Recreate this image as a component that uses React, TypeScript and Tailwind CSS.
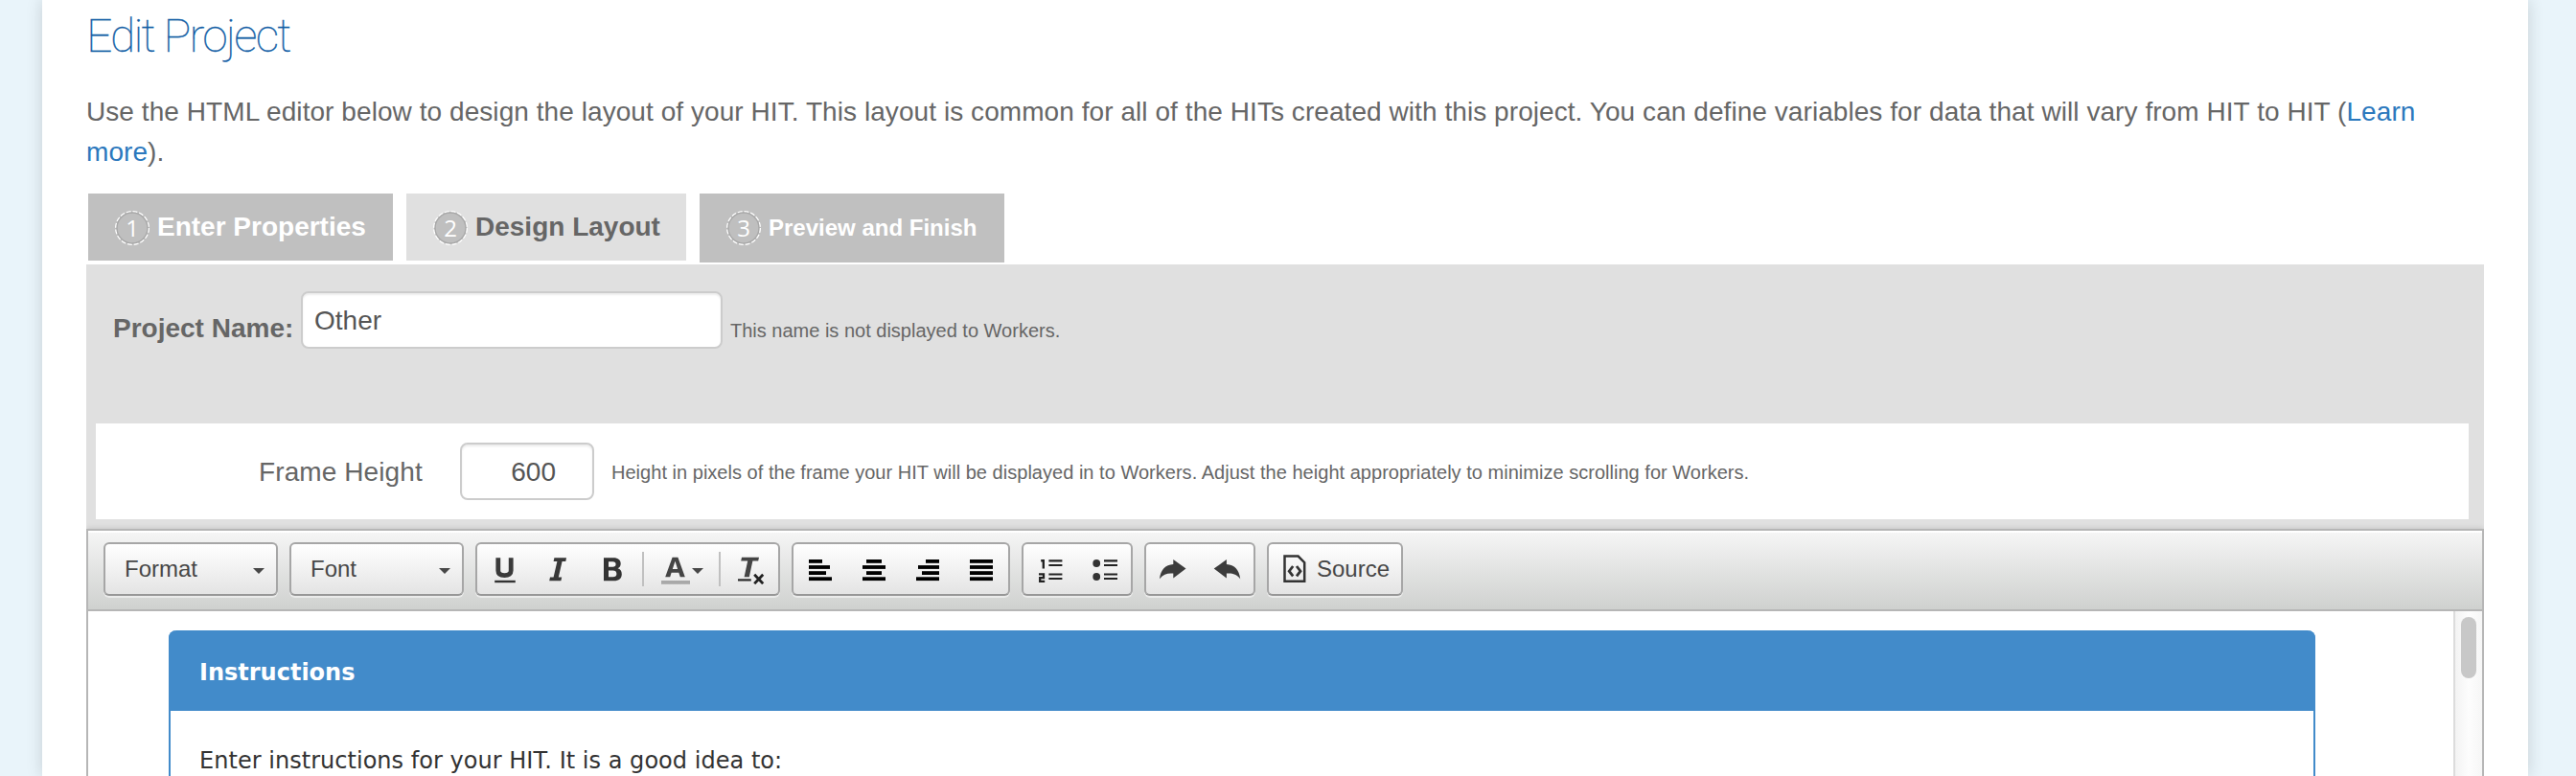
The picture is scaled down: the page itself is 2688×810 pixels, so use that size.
import type { ReactNode } from "react";

const sans = "font-['Liberation_Sans',Arial,sans-serif]";

function StepBadge({ n }: { n: string }) {
  return (
    <svg width="36" height="36" viewBox="0 0 36 36" className="mt-[18px] shrink-0">
      <circle cx="18" cy="18" r="17" fill="#c0c0c0" stroke="#fff" strokeWidth="2" strokeDasharray="4.8 1.876" />
      <circle cx="18" cy="18" r="16" fill="#bfbfbf" stroke="#a8a8a8" strokeWidth="1.4" />
      <text
        x="18"
        y="27"
        textAnchor="middle"
        fill="#fff"
        fontSize="24"
        fontWeight="500"
        fontFamily="'Open Sans', sans-serif"
      >
        {n}
      </text>
    </svg>
  );
}

function Group({ children, className = "" }: { children: ReactNode; className?: string }) {
  return (
    <div
      className={
        "flex h-14 shrink-0 items-center rounded-[6px] border-2 border-[#a6a6a6] border-b-[#979797] bg-linear-to-b from-white to-[#e4e4e4] shadow-[0_2px_0_rgba(255,255,255,0.5)] " +
        className
      }
    >
      {children}
    </div>
  );
}

function Icon({ children }: { children: ReactNode }) {
  return (
    <svg width="32" height="32" viewBox="0 0 32 32" className="mx-3 shrink-0" fill="none">
      {children}
    </svg>
  );
}

function Caret() {
  return (
    <svg width="12" height="6" viewBox="0 0 12 6" className="shrink-0">
      <path d="M0 0H12L6 6Z" fill="#474747" />
    </svg>
  );
}

function Separator() {
  return <div className="mx-1 h-9 w-[2px] shrink-0 bg-[#c0c0c0]" />;
}

function Bars({ rows }: { rows: [number, number][] }) {
  return (
    <Icon>
      {rows.map(([a, b], i) => (
        <rect key={i} x={a} y={6 + i * 6.1} width={b - a} height="3.8" fill="#000" />
      ))}
    </Icon>
  );
}

function ListLines({ x }: { x: number }) {
  return <path d={`M${x} 7.3h14M${x} 12h14M${x} 21.5h14M${x} 26h14`} stroke="#222" strokeWidth="2.2" />;
}

function Combo({ label }: { label: string }) {
  return (
    <Group className="w-[182px] justify-between pr-3 pl-5">
      <span className="text-[24px] leading-[50px] text-[#474747]">{label}</span>
      <div className="flex pt-[3px]">
        <Caret />
      </div>
    </Group>
  );
}

function Toolbar() {
  return (
    <div className="flex h-[84px] shrink-0 gap-3 border-t-2 border-b-2 border-t-white border-b-[#b6b6b6] bg-linear-to-b from-[#f5f5f5] to-[#cfd1cf] bg-clip-padding pt-[10px] pl-4">
      <Combo label="Format" />
      <Combo label="Font" />
      <Group>
        <Icon>
          <path d="M9.8 4.2V17.5Q9.8 22.6 16.5 22.6T23.2 17.5V4.2" stroke="#3a3a3a" strokeWidth="4.8" />
          <path d="M6.2 29H27.8" stroke="#333" strokeWidth="2.4" />
        </Icon>
        <Icon>
          <path d="M12.4 4.3H25L24.3 8H20.6L16.8 24.4H20.2L19.4 28.2H7.2L8 24.4H11.6L15.4 8H11.6Z" fill="#383838" />
        </Icon>
        <Icon>
          <path
            fillRule="evenodd"
            d="M8 4.2H18.2C23 4.2 25.7 6.6 25.7 10.2C25.7 12.7 24.5 14.5 22.6 15.3C25.2 16 26.8 18.2 26.8 21.2C26.8 25.6 23.8 28.2 18.6 28.2H8ZM13 8.2V13.8H17.4C19.4 13.8 20.6 12.8 20.6 11S19.4 8.2 17.4 8.2ZM13 17.6V24.2H17.6C20 24.2 21.4 23 21.4 20.9S20 17.6 17.6 17.6Z"
            fill="#333"
          />
        </Icon>
        <Separator />
        <div className="flex w-[70px] items-center">
          <svg width="32" height="32" viewBox="0 0 32 32" className="ml-3 shrink-0">
            <path
              fillRule="evenodd"
              d="M13.6 3.7H19.4L26.8 24.2H21.8L20.3 19.8H12.6L11.2 24.2H6.2ZM16.5 7.8L13.8 16H19.1Z"
              fill="#444"
            />
            <path d="M2 28H32V31.8H2Z" fill="#a9a9a9" />
          </svg>
          <div className="ml-[2px] flex pt-[3px]">
            <Caret />
          </div>
        </div>
        <Separator />
        <Icon>
          <path d="M6 3.7H24L23.2 7.6H17.4L13.8 24.2H8.6L12.2 7.6H5.2Z" fill="#444" />
          <path d="M2 27.4H15.8" stroke="#2a2a2a" strokeWidth="2.2" />
          <path d="M19.2 21.8L28.2 31.2M28.2 21.8L19.2 31.2" stroke="#222" strokeWidth="2.8" />
        </Icon>
      </Group>
      <Group>
        <Bars rows={[[4, 18], [4, 26], [4, 22], [4, 28]]} />
        <Bars rows={[[8, 24], [4, 28], [8, 24], [4, 28]]} />
        <Bars rows={[[14, 28], [6, 28], [10, 28], [4, 28]]} />
        <Bars rows={[[4, 28], [4, 28], [4, 28], [4, 28]]} />
      </Group>
      <Group>
        <Icon>
          <path d="M6.2 7.2H8.8V15.6" stroke="#222" strokeWidth="2.4" />
          <path d="M4 21.4H9V25.2H5.2V28.8H10.2" stroke="#222" strokeWidth="2.3" />
          <ListLines x={14.4} />
        </Icon>
        <Icon>
          <circle cx="8.2" cy="10" r="3.9" fill="#333" />
          <circle cx="8.2" cy="24" r="3.9" fill="#333" />
          <ListLines x={16} />
        </Icon>
      </Group>
      <Group>
        <Icon>
          <path d="M16.3 6L29.5 15.6L16.3 25.4V20.6C10.5 20 6 21.4 2 26.2C3 17 8 11.4 16.3 11Z" fill="#3c3c3c" />
        </Icon>
        <Icon>
          <path d="M15.9 6L2.7 15.6L15.9 25.4V20.6C21.7 20 26.2 21.4 30.2 26.2C29.2 17 24.2 11.4 15.9 11Z" fill="#3c3c3c" />
        </Icon>
      </Group>
      <Group className="w-[142px]">
        <svg width="32" height="32" viewBox="0 0 32 32" className="ml-3 shrink-0" fill="none">
          <path d="M4.5 2.6H18.6L25.2 9.2V28.8H4.5Z" stroke="#333" strokeWidth="2.5" />
          <path d="M13.2 13L9.2 18.2L13.2 23.4M17 13L21 18.2L17 23.4" stroke="#333" strokeWidth="2.8" />
        </svg>
        <span className="ml-[6px] text-[24px] leading-[50px] text-[#474747]">Source</span>
      </Group>
    </div>
  );
}

export default function App() {
  return (
    <div className={"flex h-[810px] w-[2688px] overflow-hidden bg-[#e9f4fa] pl-[44px] " + sans}>
      <div className="flex w-[2594px] flex-col bg-white pr-[46px] pl-[46px] text-[28px] text-[#666] shadow-[0_0_16px_rgba(0,0,0,0.15)]">
        <h1 className="h-[96px] shrink-0 pt-[8px] font-['Roboto',sans-serif] text-[48px] leading-[60px] font-thin tracking-[-1.85px] text-[#145fa6] [-webkit-text-stroke:0.3px_#145fa6]">
          Edit Project
        </h1>
        <div className="h-[106px] shrink-0 leading-[42px] tracking-[0.065px] whitespace-nowrap">
          <p>
            Use the HTML editor below to design the layout of your HIT. This layout is common for all of the HITs
            created with this project. You can define variables for data that will vary from HIT to HIT (
            <a className="text-[#2b78bd]">Learn</a>
          </p>
          <p>
            <a className="text-[#2b78bd]">more</a>).
          </p>
        </div>

        <div className="flex h-[74px] shrink-0 items-start gap-[14px] pl-[2px] font-bold">
          <div className="flex h-[70px] w-[318px] gap-2 bg-[#c0c0c0] pl-7 leading-[70px] text-white">
            <StepBadge n="1" />
            <span>Enter Properties</span>
          </div>
          <div className="flex h-[70px] w-[292px] gap-2 bg-[#e0e0e0] pl-7 leading-[70px]">
            <StepBadge n="2" />
            <span>Design Layout</span>
          </div>
          <div className="flex h-[72px] w-[318px] gap-2 bg-[#c0c0c0] pl-7 text-[24px] leading-[72px] text-white">
            <StepBadge n="3" />
            <span>Preview and Finish</span>
          </div>
        </div>

        <div className="flex h-[276px] shrink-0 flex-col bg-[#e0e0e0]">
          <div className="flex h-[166px] items-start pt-7 pl-7">
            <span className="w-[196px] pt-[5px] leading-[68px] font-bold">Project Name:</span>
            <div className="h-[60px] w-[440px] rounded-[8px] border-2 border-[#ccc] bg-white pl-3 leading-[58px] text-[#555] shadow-[inset_0_2px_2px_rgba(0,0,0,0.075)]">
              Other
            </div>
            <span className="pt-1 pl-[8px] text-[20px] leading-[74px]">This name is not displayed to Workers.</span>
          </div>
          <div className="ml-[10px] flex h-[100px] w-[2476px] items-start bg-white pt-5">
            <span className="w-[380px] pl-[170px] leading-[62px] tracking-[0.1px]">Frame Height</span>
            <div className="h-[60px] w-[140px] rounded-[8px] border-2 border-[#ccc] bg-white pr-[38px] text-right leading-[58px] text-[#555] shadow-[inset_0_2px_2px_rgba(0,0,0,0.075)]">
              600
            </div>
            <span className="pl-[18px] text-[20px] leading-[63px] tracking-[0.024px]">
              Height in pixels of the frame your HIT will be displayed in to Workers. Adjust the height appropriately to
              minimize scrolling for Workers.
            </span>
          </div>
        </div>

        <div className="flex h-[258px] shrink-0 flex-col border-x-2 border-t-2 border-[#b6b6b6] bg-white shadow-[0_0_6px_rgba(0,0,0,0.15)] [clip-path:inset(-10px_0_0_0)]">
          <Toolbar />
          <div className="flex h-[172px] shrink-0 justify-between overflow-hidden pl-[84px]">
            <div className="mt-5 flex w-[2240px] flex-col rounded-t-[8px] border-x-2 border-[#428bca] bg-white font-['DejaVu_Sans',Verdana,sans-serif] text-[24px]">
              <div className="-mx-[2px] h-[84px] shrink-0 rounded-t-[8px] bg-[#428bca] pl-8 leading-[88px] font-bold text-white">
                Instructions
              </div>
              <div className="shrink-0 pt-[34px] pl-[30px] leading-9 tracking-[0.03px] whitespace-nowrap text-[#333]">
                Enter instructions for your HIT. It is a good idea to:
              </div>
            </div>
            <div className="flex w-[30px] justify-center border-l-2 border-[#dcdcdc] bg-linear-to-r from-[#f3f3f3] via-[#fdfdfd] to-[#f6f6f6] pt-[6px]">
              <div className="h-16 w-4 rounded-full bg-[#c8c8c8]" />
            </div>
          </div>
        </div>
      </div>
    </div>
  );
}
